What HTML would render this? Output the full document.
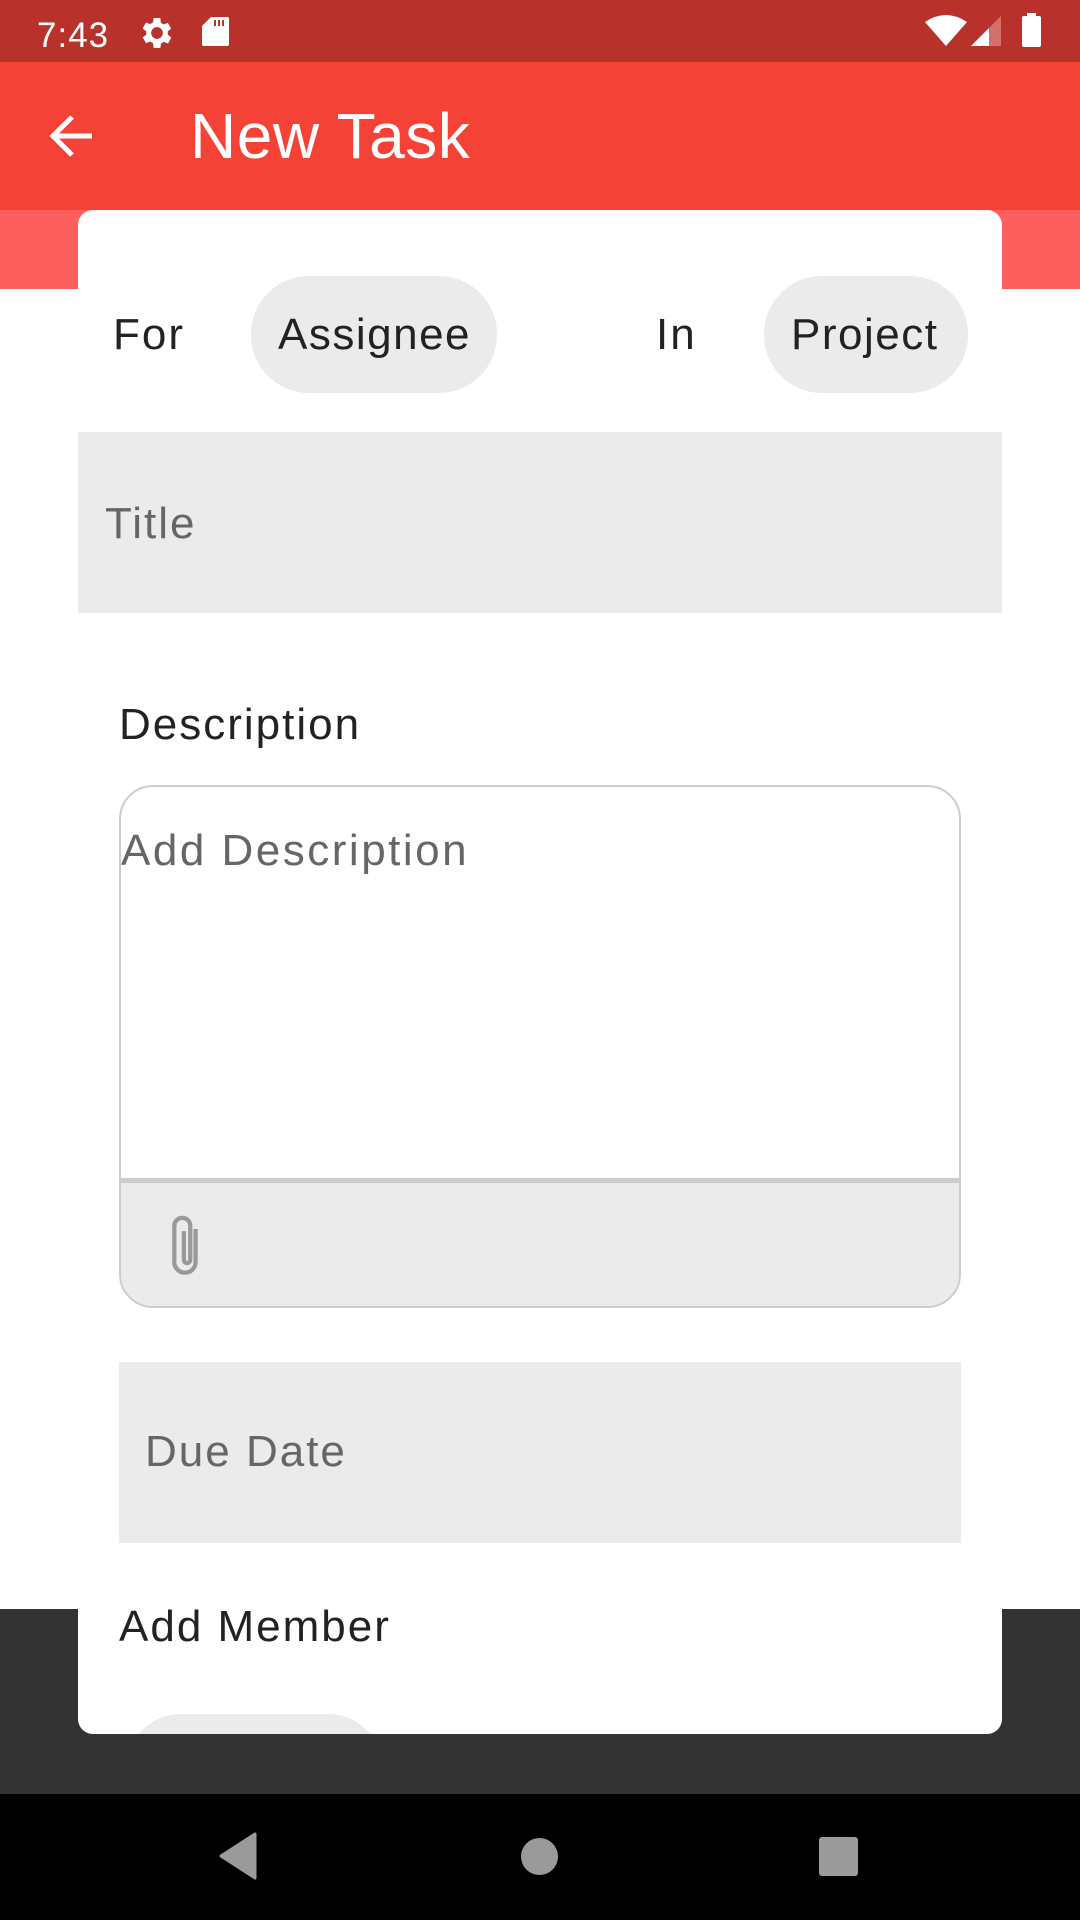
<!DOCTYPE html>
<html><head><meta charset="utf-8"><style>
*{margin:0;padding:0;box-sizing:border-box}
body{width:1080px;height:1920px;position:relative;overflow:hidden;background:#fff;font-family:"Liberation Sans",sans-serif}
.a{position:absolute}
.t{position:absolute;white-space:nowrap;line-height:1;letter-spacing:2px}
</style></head><body>
<div class="a" style="left:0;top:0;width:1080px;height:62px;background:#b8312a"></div>
<div class="t" style="left:37px;top:18px;font-size:35px;color:#fff;letter-spacing:1px">7:43</div>
<svg class="a" style="left:136px;top:13px" width="42" height="40" viewBox="0 0 24 24"><path fill="#fff" d="M19.4 13a7.5 7.5 0 0 0 0-2l2.1-1.6-2-3.5-2.5 1a7 7 0 0 0-1.7-1L15 3h-4l-.4 2.7a7 7 0 0 0-1.7 1l-2.5-1-2 3.5L6.6 11a7.5 7.5 0 0 0 0 2l-2.2 1.6 2 3.5 2.5-1a7 7 0 0 0 1.7 1L11 21h4l.4-2.7a7 7 0 0 0 1.7-1l2.5 1 2-3.5zM13 15.5a3.5 3.5 0 1 1 0-7 3.5 3.5 0 0 1 0 7z" transform="translate(-1 0)"/></svg>
<svg class="a" style="left:202px;top:17px" width="27" height="29" viewBox="0 0 27 29"><path fill="#fff" d="M9 0h16a2 2 0 0 1 2 2v25a2 2 0 0 1-2 2H2a2 2 0 0 1-2-2V9z"/><rect x="12" y="3" width="2" height="6" fill="#b8312a"/><rect x="16" y="3" width="2" height="6" fill="#b8312a"/><rect x="20" y="3" width="2" height="6" fill="#b8312a"/></svg>
<svg class="a" style="left:925px;top:14px" width="42" height="32" viewBox="0 0 42 32"><path fill="#fff" d="M0 8Q21-6 42 8L21 32z"/></svg>
<svg class="a" style="left:971px;top:16px" width="32" height="30" viewBox="0 0 32 30"><path fill="#d4706a" d="M30 0V30H0z"/><path fill="#fff" d="M18 12V30H0z"/></svg>
<svg class="a" style="left:1022px;top:13px" width="19" height="34" viewBox="0 0 19 34"><rect x="5" y="0" width="9" height="4" fill="#fff"/><rect x="0" y="3" width="19" height="31" rx="2" fill="#fff"/></svg>

<div class="a" style="left:0;top:62px;width:1080px;height:148px;background:#f44336"></div>
<svg class="a" style="left:48px;top:114px" width="50" height="44" viewBox="0 0 50 44"><path d="M44 22H6M24 3L5 22l19 19" stroke="#fff" stroke-width="5" fill="none"/></svg>
<div class="t" style="left:190px;top:104px;font-size:64px;color:#fff;letter-spacing:0.5px">New Task</div>

<div class="a" style="left:0;top:210px;width:1080px;height:79px;background:#fd5e5e"></div>
<div class="a" style="left:0;top:1609px;width:1080px;height:185px;background:#333"></div>
<div class="a" style="left:78px;top:210px;width:924px;height:1524px;background:#fff;border-radius:15px;overflow:hidden">
  <div class="a" style="left:48px;top:1504px;width:257px;height:110px;border-radius:55px;background:#ebebeb"></div>
</div>

<div class="t" style="left:113px;top:313px;font-size:44px;color:#222">For</div>
<div class="a" style="left:251px;top:276px;width:246px;height:117px;border-radius:58px;background:#ebebeb"></div>
<div class="t" style="left:278px;top:313px;font-size:44px;color:#222;letter-spacing:1.5px">Assignee</div>
<div class="t" style="left:656px;top:313px;font-size:44px;color:#222">In</div>
<div class="a" style="left:764px;top:276px;width:204px;height:117px;border-radius:58px;background:#ebebeb"></div>
<div class="t" style="left:791px;top:313px;font-size:44px;color:#222;letter-spacing:1.5px">Project</div>

<div class="a" style="left:78px;top:432px;width:924px;height:181px;background:#ebebeb"></div>
<div class="t" style="left:105px;top:502px;font-size:44px;color:#666">Title</div>

<div class="t" style="left:119px;top:703px;font-size:44px;color:#222">Description</div>
<div class="a" style="left:119px;top:785px;width:842px;height:523px;border:2px solid #ccc;border-radius:34px;overflow:hidden">
  <div class="a" style="left:0;top:391px;width:842px;height:140px;background:#ebebeb;border-top:5px solid #ccc"></div>
</div>
<div class="t" style="left:121px;top:829px;font-size:44px;color:#666;letter-spacing:2.5px">Add Description</div>
<svg class="a" style="left:167px;top:1212px" width="38" height="66" viewBox="0 0 34 62"><path d="M27 16V47a10 10 0 0 1-20 0V13a7.5 7.5 0 0 1 15 0V45a3 3 0 0 1-6 0V18" stroke="#999" stroke-width="4" fill="none" transform="translate(-1 0)"/></svg>

<div class="a" style="left:119px;top:1362px;width:842px;height:181px;background:#ebebeb"></div>
<div class="t" style="left:145px;top:1430px;font-size:44px;color:#666">Due Date</div>
<div class="t" style="left:119px;top:1605px;font-size:44px;color:#222">Add Member</div>

<div class="a" style="left:0;top:1794px;width:1080px;height:126px;background:#000"></div>
<svg class="a" style="left:218px;top:1832px" width="40" height="48" viewBox="0 0 40 48"><path d="M37 2L3 24l34 22z" fill="#9a9a9a" stroke="#9a9a9a" stroke-width="3" stroke-linejoin="round"/></svg>
<div class="a" style="left:521px;top:1838px;width:37px;height:37px;border-radius:50%;background:#9a9a9a"></div>
<div class="a" style="left:819px;top:1837px;width:39px;height:39px;border-radius:3px;background:#9a9a9a"></div>
</body></html>
